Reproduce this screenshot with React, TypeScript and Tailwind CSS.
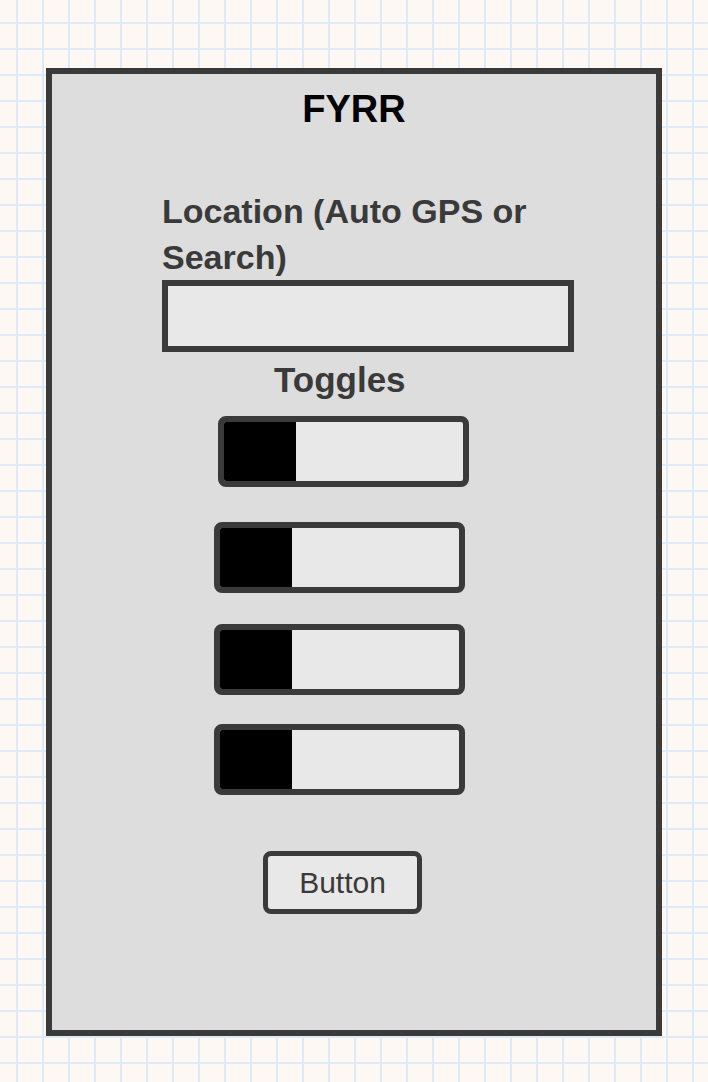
import React from "react";

const font = { fontFamily: '"Liberation Sans", Arial, Helvetica, sans-serif' };

function Toggle({ className }: { className: string }) {
  return (
    <div
      className={`w-[251px] h-[71px] border-[6px] border-[#3a3a3a] rounded-[8px] bg-[#e8e8e8] flex overflow-hidden ${className}`}
    >
      <div className="w-[72px] h-full bg-black" />
    </div>
  );
}

export default function App() {
  return (
    <div
      style={font}
      className="min-h-screen w-full pt-[68px] pl-[46px] bg-[#fdf8f4] bg-[linear-gradient(to_right,#dfeaf8_2px,transparent_2px),linear-gradient(to_bottom,#dfeaf8_2px,transparent_2px)] bg-[size:26px_26px] bg-[position:16px_22px]"
    >
      <div className="w-[616px] h-[968px] border-[6px] border-[#3a3a3a] bg-[#dddddd] flex flex-col items-start">
        <h1 className="w-full mt-[16px] text-center text-[38px] leading-[38px] font-bold text-black">
          FYRR
        </h1>

        <div className="ml-[110px] mt-[60px] w-[412px]">
          <label className="block text-[34px] leading-[46px] font-bold text-[#3a3a3a]">
            Location (Auto GPS or Search)
          </label>
          <input
            type="text"
            className="block w-[412px] h-[72px] border-[6px] border-[#3a3a3a] bg-[#e8e8e8] outline-none"
          />
        </div>

        <h2 className="ml-[222px] mt-[10px] text-[35px] leading-[35px] font-bold text-[#3a3a3a]">
          Toggles
        </h2>

        <Toggle className="ml-[166px] mt-[19px]" />
        <Toggle className="ml-[162px] mt-[35px]" />
        <Toggle className="ml-[162px] mt-[31px]" />
        <Toggle className="ml-[162px] mt-[29px]" />

        <button className="ml-[211px] mt-[56px] w-[159px] h-[63px] border-[5px] border-[#3a3a3a] rounded-[8px] bg-[#e8e8e8] text-[30px] leading-none text-[#3a3a3a] flex items-center justify-center">
          Button
        </button>
      </div>
    </div>
  );
}
